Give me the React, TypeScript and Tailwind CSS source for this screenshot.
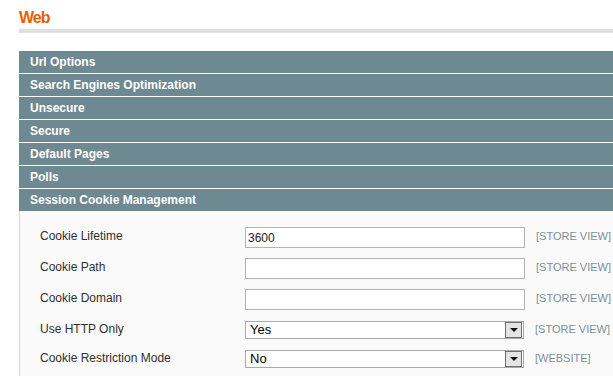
import React from 'react';

const sections = [
  'Url Options',
  'Search Engines Optimization',
  'Unsecure',
  'Secure',
  'Default Pages',
  'Polls',
  'Session Cookie Management',
];

type Field = {
  label: string;
  kind: 'text' | 'select';
  value: string;
  scope: string;
  rowClass: string;
};

const fields: Field[] = [
  { label: 'Cookie Lifetime', kind: 'text', value: '3600', scope: '[STORE VIEW]', rowClass: 'h-[31px]' },
  { label: 'Cookie Path', kind: 'text', value: '', scope: '[STORE VIEW]', rowClass: 'h-[31px]' },
  { label: 'Cookie Domain', kind: 'text', value: '', scope: '[STORE VIEW]', rowClass: 'h-[31px]' },
  { label: 'Use HTTP Only', kind: 'select', value: 'Yes', scope: '[STORE VIEW]', rowClass: 'h-[29px]' },
  { label: 'Cookie Restriction Mode', kind: 'select', value: 'No', scope: '[WEBSITE]', rowClass: 'h-[29px]' },
];

const SelectBox: React.FC<{ value: string }> = ({ value }) => (
  <div className="mt-px flex h-[18px] w-[279px] items-center justify-between border border-[#aaaaaa] bg-white pl-[4px] pr-px text-[13px] text-black">
    <span>{value}</span>
    <div className="flex h-[16px] w-[17px] items-center justify-center border border-[#707070] bg-[#e4e4e4]">
      <svg width="8" height="4" viewBox="0 0 8 4">
        <path d="M0 0 L8 0 L4 4 Z" fill="#111" />
      </svg>
    </div>
  </div>
);

const TextBox: React.FC<{ value: string }> = ({ value }) => (
  <div className="flex h-[21px] w-[280px] items-center border border-[#b4b4b4] bg-white pl-[2px] text-[12px] text-[#1a1a1a]">
    {value}
  </div>
);

export default function App() {
  return (
    <div className="h-screen overflow-hidden bg-white pl-[19px] font-['Liberation_Sans',Arial,sans-serif]">
      <h3 className="pt-[9px] text-[16px] font-bold leading-[18px] tracking-[-1px] text-[#eb5e00]">Web</h3>
      <div className="mt-[2px] h-[4px] bg-[#dfdfdf]" />

      <div className="mt-[18px] flex flex-col gap-px">
        {sections.map(s => (
          <div key={s} className="flex h-[22px] items-center bg-[#6f8992] pl-[11px] text-[12px] font-bold text-white">
            {s}
          </div>
        ))}
      </div>

      <div className="flex h-[200px] flex-col border-l border-[#d6d6d6] bg-[#fafafa] pl-[20px] pt-[16px]">
        {fields.map(f => (
          <div key={f.label} className={`flex items-start ${f.rowClass}`}>
            <div className="w-[205px] pt-[2px] text-[12px] leading-[15px] text-[#2f2f2f]">{f.label}</div>
            {f.kind === 'text' ? <TextBox value={f.value} /> : <SelectBox value={f.value} />}
            <div className="ml-[11px] pt-[3px] text-[11px] leading-[13px] text-[#7d8f99]">{f.scope}</div>
          </div>
        ))}
      </div>
    </div>
  );
}
